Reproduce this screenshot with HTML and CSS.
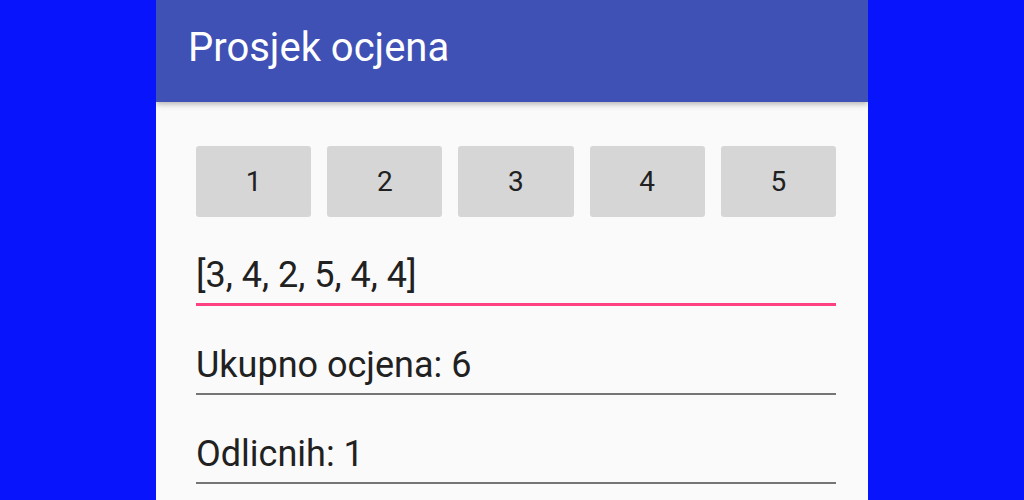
FILE: index.html
```html
<!DOCTYPE html>
<html lang="hr">
<head>
    <meta charset="UTF-8">
    <meta name="viewport" content="width=device-width, initial-scale=1.0">
    <title>Prosjek ocjena</title>
    <link rel="stylesheet" href="styles.css">
</head>
<body>
    <div class="phone">
        <header class="app-bar">
            <h1 class="app-title">Prosjek ocjena</h1>
        </header>

        <main class="content">
            <div class="grades">
                <button class="grade-btn">1</button>
                <button class="grade-btn">2</button>
                <button class="grade-btn">3</button>
                <button class="grade-btn">4</button>
                <button class="grade-btn">5</button>
            </div>

            <div class="field field-active">[3, 4, 2, 5, 4, 4]</div>
            <div class="field">Ukupno ocjena: 6</div>
            <div class="field">Odlicnih: 1</div>
        </main>
    </div>
</body>
</html>
```

FILE: styles.css
```css
body {
    margin: 0;
    background-color: #0814fc; /* blue backdrop around the phone */
    font-family: Roboto, "Liberation Sans", sans-serif;
    height: 500px;
    overflow: hidden;
}

.phone {
    width: 712px;
    height: 500px;
    margin: 0 auto;
    background-color: #fafafa;
    overflow: hidden;
}

.app-bar {
    height: 102px;
    box-sizing: border-box;
    padding: 28px 0 0 32px;
    background-color: #3f51b5;
    box-shadow: 0 2px 6px rgba(0, 0, 0, 0.3);
    position: relative;
}

.app-title {
    margin: 0;
    font-size: 40px;
    line-height: 40px;
    font-weight: 400;
    color: #ffffff;
}

.content {
    padding: 44px 32px 0 40px;
}

.grades {
    display: grid;
    grid-template-columns: repeat(5, 1fr);
    gap: 16px;
}

.grade-btn {
    height: 71px;
    border: none;
    border-radius: 3px;
    background-color: #d6d6d6;
    color: #212121;
    font-family: inherit;
    font-size: 28px;
    padding: 0;
}

.field {
    margin-top: 38px;
    font-size: 36px;
    line-height: 42px;
    color: #212121;
    padding-bottom: 7px;
    border-bottom: 2px solid #757575;
}

.field-active {
    margin-top: 37px;
    border-bottom: 3px solid #ff4081;
}
```
